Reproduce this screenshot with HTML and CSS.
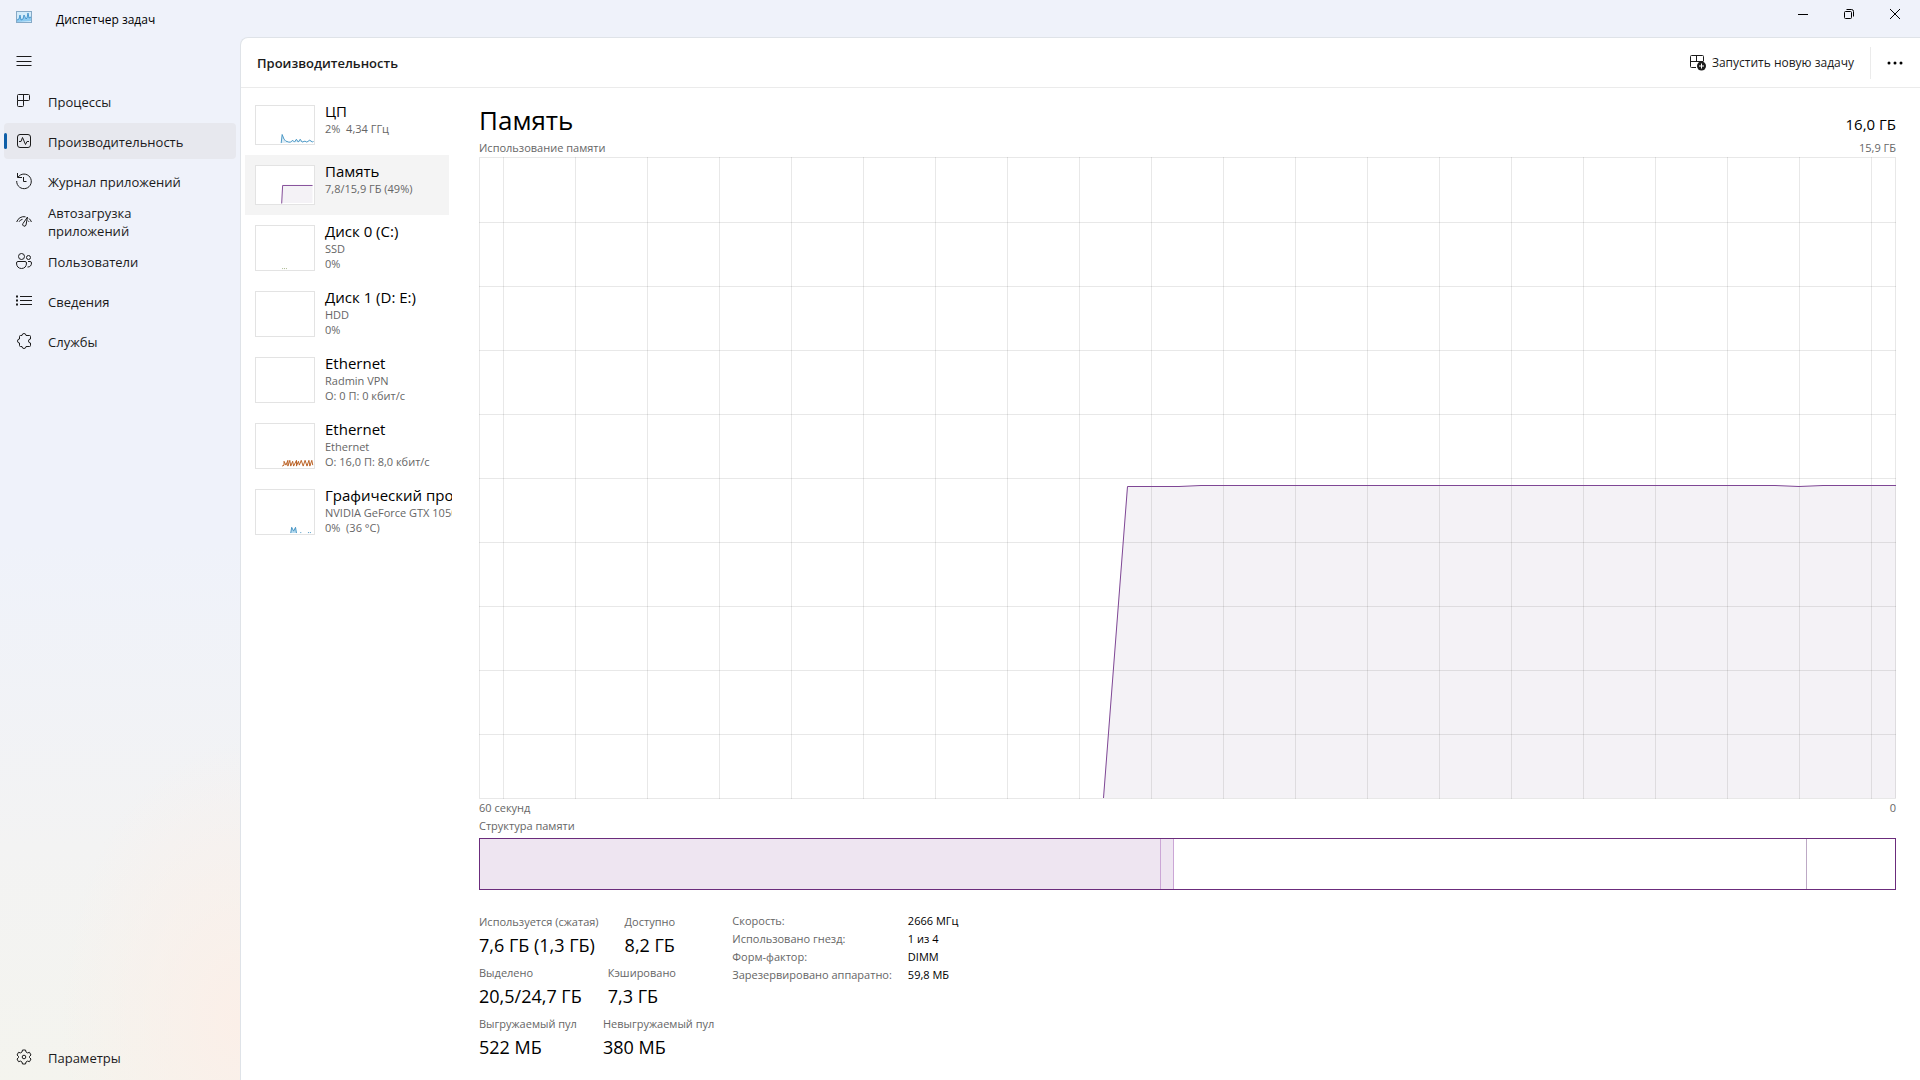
FILE: index.html
```html
<!DOCTYPE html>
<html lang="ru">
<head>
<meta charset="utf-8">
<title>Диспетчер задач</title>
<link rel="stylesheet" href="styles.css">
</head>
<body>
<header class="titlebar">
  <svg class="app-icon" width="16" height="12" viewBox="0 0 16 12"><rect x=".5" y=".5" width="15" height="11" fill="#d3ecfb" stroke="#86a9c6"/><path d="M1 11V9l2-1 1-3 1 4 2-1 1-3 2 3 1-1 1-4 1 4 2-1v4z" fill="#8ccaf0"/><path d="M1 9l2-1 1-4 1 5 2-1 1-4 2 4 1-1 1-5 1 5 2-1" fill="none" stroke="#2f86c4" stroke-width=".8"/></svg>
  <h1 class="app-title">Диспетчер задач</h1>
  <div class="window-buttons">
    <button class="window-button" aria-label="Свернуть"><svg width="12" height="12" viewBox="0 0 12 12"><path d="M1 6.500h10"/></svg></button>
    <button class="window-button" aria-label="Восстановить"><svg width="12" height="12" viewBox="0 0 12 12"><rect x="1.500" y="3.500" width="7" height="7" rx="1"/><path d="M3.500 1.500h5a2 2 0 0 1 2 2v5"/></svg></button>
    <button class="window-button" aria-label="Закрыть"><svg width="12" height="12" viewBox="0 0 12 12"><path d="M1 1l10 10M11 1L1 11"/></svg></button>
  </div>
</header>
<div class="shell">
  <nav class="sidebar">
    <button class="nav-item" aria-label="Меню"><svg class="icon" viewBox="0 0 16 16"><path d="M.5 3.500h15M.5 8.500h15M.5 12.500h15"/></svg></button>
    <button class="nav-item"><svg class="icon" viewBox="0 0 16 16"><path d="M2.500 1.500h10a1 1 0 0 1 1 1v4a1 1 0 0 1-1 1h-11v-5a1 1 0 0 1 1-1zM1.500 7.500v5a1 1 0 0 0 1 1h4a1 1 0 0 0 1-1v-11"/></svg><span class="nav-label">Процессы</span></button>
    <button class="nav-item selected" aria-current="page"><svg class="icon" viewBox="0 0 16 16"><rect x="1.500" y="1.500" width="13" height="13" rx="2.500"/><path d="M3 8.500h2l1.500-4 3 7 1.500-3h2"/></svg><span class="nav-label">Производительность</span></button>
    <button class="nav-item"><svg class="icon" viewBox="0 0 16 16"><path d="M1.500 0v4.500h4.500M2 4.200A7.300 7.300 0 1 1 .7 8M7.500 4v4.500h3"/></svg><span class="nav-label">Журнал приложений</span></button>
    <button class="nav-item"><svg class="icon" viewBox="0 0 16 16"><path d="M.7 9A7.500 7.500 0 0 1 9.500 3.800M13 5.500A7.500 7.500 0 0 1 15.400 9M3 8.800a5 5 0 0 1 3.500-2.500M13 8.800l-1-1.200M11.500 4L7 10.500a1.700 1.700 0 1 0 3 1.500z"/></svg><span class="nav-label">Автозагрузка<br>приложений</span></button>
    <button class="nav-item"><svg class="icon" viewBox="0 0 16 16"><circle cx="5.500" cy="3.500" r="3"/><circle cx="12.500" cy="4.500" r="2"/><path d="M2 8.500h7a1.500 1.500 0 0 1 1.500 1.500c0 3.500-2 5.500-5 5.500s-5-2-5-5.500A1.500 1.500 0 0 1 2 8.500zM12 8.500h2a1.500 1.500 0 0 1 1.500 1.500c0 2.500-1.500 4.200-4 4"/></svg><span class="nav-label">Пользователи</span></button>
    <button class="nav-item"><svg class="icon" viewBox="0 0 16 16"><path d="M4 3.500h12M4 7.500h12M4 11.500h12"/><path stroke-width="2" d="M0 3.500h2M0 7.500h2M0 11.500h2"/></svg><span class="nav-label">Сведения</span></button>
    <button class="nav-item"><svg class="icon" viewBox="0 0 16 16"><path d="M4.500 2.500H6a2 2 0 0 1 4 0h3.500a1 1 0 0 1 1 1V6a2 2 0 0 0 0 4v2.500a1 1 0 0 1-1 1H10a2 2 0 0 1-4 0H4.500a1 1 0 0 1-1-1V10a2 2 0 0 1 0-4V3.500a1 1 0 0 1 1-1z"/></svg><span class="nav-label">Службы</span></button>
    <button class="nav-item settings"><svg class="icon" viewBox="0 0 16 16"><path d="M6.500 1h3l.5 2 1.500.9 2-.6L15 6l-1.500 1.400v1.200L15 10l-1.500 2.700-2-.6L10 13l-.5 2h-3L6 13l-1.500-.9-2 .6L1 10l1.500-1.400V7.400L1 6l1.500-2.700 2 .6L6 3z"/><circle cx="8" cy="8" r="1.800"/></svg><span class="nav-label">Параметры</span></button>
  </nav>
  <main class="panel">
    <div class="toolbar">
      <h2 class="toolbar-title">Производительность</h2>
      <button class="run-task"><svg class="icon" viewBox="0 0 16 16"><path d="M13.500 6V1.500a1 1 0 0 0-1-1h-11a1 1 0 0 0-1 1v10a1 1 0 0 0 1 1H6M.5 6.500H8M6.500.5v6M6.500 6.500h7"/><circle cx="11.500" cy="11" r="4.500" fill="#1b1b1b" stroke="none"/><path stroke="#fff" d="M11.500 8.500v5M9 11h5"/></svg>Запустить новую задачу</button>
      <button class="more" aria-label="Дополнительно"><svg width="16" height="4" viewBox="0 0 16 4"><circle cx="2" cy="2" r="1.500"/><circle cx="8" cy="2" r="1.500"/><circle cx="14" cy="2" r="1.500"/></svg></button>
    </div>
    <div class="content">
      <div class="resources">
        <button class="resource short"><svg class="thumb" viewBox="0 0 60 40"><path stroke="#4393c3" fill="#dcecf6" d="M26 39l1-9 2 5 1 1 1 1 3 1 2 0 2-2 2 2 2-3 2 3 2-3 2 3 3-1 2 1 3-2 3 2 1-1"/></svg><span class="resource-text"><span class="name">ЦП</span><span class="sub">2%&nbsp; 4,34 ГГц</span></span></button>
        <button class="resource short selected"><svg class="thumb" viewBox="0 0 60 40"><path fill="#f4f2f6" stroke="none" d="M26 39l1-19h32v19z"/><path stroke="#7f4795" fill="none" d="M26.500 39.500l1-19H59"/></svg><span class="resource-text"><span class="name">Память</span><span class="sub">7,8/15,9 ГБ (49%)</span></span></button>
        <button class="resource"><svg class="thumb" viewBox="0 0 60 46"><path stroke="#a5b58b" stroke-dasharray="1 1" d="M27 44.500h5"/></svg><span class="resource-text"><span class="name">Диск 0 (C:)</span><span class="sub">SSD</span><span class="sub">0%</span></span></button>
        <button class="resource"><svg class="thumb" viewBox="0 0 60 46"></svg><span class="resource-text"><span class="name">Диск 1 (D: E:)</span><span class="sub">HDD</span><span class="sub">0%</span></span></button>
        <button class="resource"><svg class="thumb" viewBox="0 0 60 46"></svg><span class="resource-text"><span class="name">Ethernet</span><span class="sub">Radmin VPN</span><span class="sub">О: 0 П: 0 кбит/с</span></span></button>
        <button class="resource"><svg class="thumb" viewBox="0 0 60 46"><path stroke="#b85c1e" fill="none" d="M27 44l2-1v-4l2 4 2-5v6l2-6 1 6 2-5 1 5 3-6v6l2-5 1 4 2-5 2 6 2-6 2 6 2-6 1 6 2-6 1 5"/></svg><span class="resource-text"><span class="name">Ethernet</span><span class="sub">Ethernet</span><span class="sub">О: 16,0 П: 8,0 кбит/с</span></span></button>
        <button class="resource"><svg class="thumb" viewBox="0 0 60 46"><path stroke="#4393c3" fill="#b9dcf0" d="M36 45l1-6 2 4 2-4 1 6M46 44.500h1M54 44.500h1M56 44.500h1"/></svg><span class="resource-text"><span class="name">Графический процессор</span><span class="sub">NVIDIA GeForce GTX 1050</span><span class="sub">0%&nbsp; (36 °C)</span></span></button>
      </div>
      <section class="details">
        <div class="heading"><h3 class="heading-title">Память</h3><span class="capacity">16,0 ГБ</span></div>
        <div class="caption"><span>Использование памяти</span><span>15,9 ГБ</span></div>
        <svg class="chart" viewBox="0 0 1417 642" preserveAspectRatio="none">
          <path class="area" d="M624 641L648 329.500H700L722 328.500H1296L1320 329.500L1344 328.500H1417V641z"/>
          <path class="grid" d="M.5 .5H1416.500V641.500H.5zM24.500 0V642M96.500 0V642M168.500 0V642M240.500 0V642M312.500 0V642M384.500 0V642M456.500 0V642M528.500 0V642M600.500 0V642M672.500 0V642M744.500 0V642M816.500 0V642M888.500 0V642M960.500 0V642M1032.500 0V642M1104.500 0V642M1176.500 0V642M1248.500 0V642M1320.500 0V642M1392.500 0V642M0 65.500H1417M0 129.500H1417M0 193.500H1417M0 257.500H1417M0 321.500H1417M0 385.500H1417M0 449.500H1417M0 513.500H1417M0 577.500H1417"/>
          <path class="line" d="M624.500 641L648.500 329.500H700L722 328.500H1296L1320 329.500L1344 328.500H1417"/>
        </svg>
        <div class="caption axis"><span>60 секунд</span><span>0</span></div>
        <div class="caption"><span>Структура памяти</span></div>
        <div class="composition">
          <div class="part used" style="flex-grow:682"></div>
          <div class="part modified" style="flex-grow:12"></div>
          <div class="part standby" style="flex-grow:635"></div>
          <div class="part free" style="flex-grow:88"></div>
        </div>
        <div class="stats">
          <div class="counters">
            <div class="counter-row"><dl><dt>Используется (сжатая)</dt><dd>7,6 ГБ (1,3 ГБ)</dd></dl><dl><dt>Доступно</dt><dd>8,2 ГБ</dd></dl></div>
            <div class="counter-row"><dl><dt>Выделено</dt><dd>20,5/24,7 ГБ</dd></dl><dl><dt>Кэшировано</dt><dd>7,3 ГБ</dd></dl></div>
            <div class="counter-row"><dl><dt>Выгружаемый пул</dt><dd>522 МБ</dd></dl><dl><dt>Невыгружаемый пул</dt><dd>380 МБ</dd></dl></div>
          </div>
          <table class="hardware">
            <tr><th>Скорость:</th><td>2666 МГц</td></tr>
            <tr><th>Использовано гнезд:</th><td>1 из 4</td></tr>
            <tr><th>Форм-фактор:</th><td>DIMM</td></tr>
            <tr><th>Зарезервировано аппаратно:</th><td>59,8 МБ</td></tr>
          </table>
        </div>
      </section>
    </div>
  </main>
</div>
</body>
</html>
```
FILE: styles.css
```css
* { box-sizing: border-box; }
body {
  margin: 0;
  min-height: 100vh;
  display: flex;
  flex-direction: column;
  font-family: "Open Sans", "Noto Sans", sans-serif;
  font-size: 12px;
  color: #1b1b1b;
  background:
    radial-gradient(ellipse 180px 280px at 240px 94%, #fbefe8 0, rgba(251, 239, 232, 0) 100%),
    linear-gradient(#eff2fa 0, #eff2fa 50%, #f3f3f3 78%, #f4f4ee 100%);
}
h1, h2, h3, dl, dd { margin: 0; font-weight: 400; }
button {
  border: 0;
  padding: 0;
  background: none;
  font: inherit;
  color: inherit;
  text-align: left;
}
svg { flex: none; }
.icon { width: 16px; height: 16px; fill: none; stroke: #1b1b1b; overflow: visible; }

.titlebar { display: flex; height: 37px; padding: 0 2px 0 16px; background: #eff2fa; }
.app-icon { margin-top: 11px; }
.app-title { margin-left: 24px; font-size: 12px; line-height: 40px; color: #000; }
.window-buttons { display: flex; margin-left: auto; }
.window-button { width: 46px; height: 28px; display: grid; place-items: center; }
.window-button svg { fill: none; stroke: #000; }

.shell { flex: 1; display: flex; }
.sidebar { width: 240px; padding: 6px 4px; display: flex; flex-direction: column; gap: 4px; }
.nav-item {
  position: relative;
  display: flex;
  align-items: center;
  gap: 16px;
  height: 36px;
  padding-left: 12px;
  border-radius: 4px;
  font-size: 13px;
  line-height: 18px;
}
.nav-label { padding-top: 2px; }
.nav-item.selected { background: #e7e8ee; }
.nav-item.selected::before {
  content: "";
  position: absolute;
  left: 0;
  top: 10px;
  width: 3px;
  height: 16px;
  border-radius: 2px;
  background: #0f5fa8;
}
.settings { margin: auto 0 6px; }

.panel {
  flex: 1;
  min-width: 0;
  display: flex;
  flex-direction: column;
  border: 1px solid #dfe3e8;
  border-right: 0;
  border-radius: 8px 0 0 0;
  background: #fff;
}
.toolbar {
  display: flex;
  align-items: center;
  height: 50px;
  padding: 0 2px 0 16px;
  border-bottom: 1px solid #ebebeb;
}
.toolbar-title { font-size: 13px; font-weight: 600; }
.run-task { display: flex; align-items: center; gap: 6px; margin-left: auto; padding-right: 16px; }
.more { width: 48px; height: 32px; display: grid; place-items: center; border-left: 1px solid #ebebeb; }

.content { flex: 1; display: flex; }
.resources { width: 211px; padding: 7px 0 0 4px; overflow: hidden; }
.resource { display: flex; gap: 10px; width: 204px; height: 66px; padding: 6px 0 0 10px; }
.resource.short { height: 60px; }
.resource.selected { background: #f4f4f4; }
.thumb { width: 60px; height: 46px; margin-top: 4px; border: 1px solid #e3e3e3; background: #fff; }
.short .thumb { height: 40px; }
.resource-text { white-space: nowrap; }
.name { display: block; font-size: 15px; line-height: 20px; color: #000; }
.sub { display: block; font-size: 11px; line-height: 15px; color: #666; }

.details { flex: 1; min-width: 0; display: flex; flex-direction: column; padding: 12px 24px 21px 27px; }
.heading { display: flex; justify-content: space-between; height: 39px; color: #000; }
.heading-title { font-size: 26px; line-height: 40px; }
.capacity { font-size: 15px; line-height: 48px; }
.caption { display: flex; justify-content: space-between; font-size: 11px; line-height: 18px; color: #666; }
.chart { flex: 1; width: 100%; min-height: 300px; }
.grid { fill: none; stroke: rgba(0, 0, 0, .09); vector-effect: non-scaling-stroke; }
.area { fill: #f4f2f6; }
.line { fill: none; stroke: #7f4795; vector-effect: non-scaling-stroke; }

.composition { display: flex; height: 52px; margin-top: 3px; border: 1px solid #6b2c7c; }
.part { border-right: 1px solid #bda9c5; }
.part:last-child { border-right: 0; }
.used, .modified { background: #eee5f1; border-color: #cba6d6; }

.stats { display: flex; gap: 18px; padding-top: 22px; }
.counter-row { display: flex; gap: 26px; height: 51px; }
dt { font-size: 11px; line-height: 20px; color: #666; }
dd { font-size: 18px; line-height: 26px; color: #000; }
.hardware { align-self: flex-start; border-collapse: collapse; font-size: 11px; line-height: 18px; text-align: left; }
.hardware th { padding: 0 16px 0 0; font-weight: 400; color: #666; }
.hardware td { padding: 0; color: #000; }
```
